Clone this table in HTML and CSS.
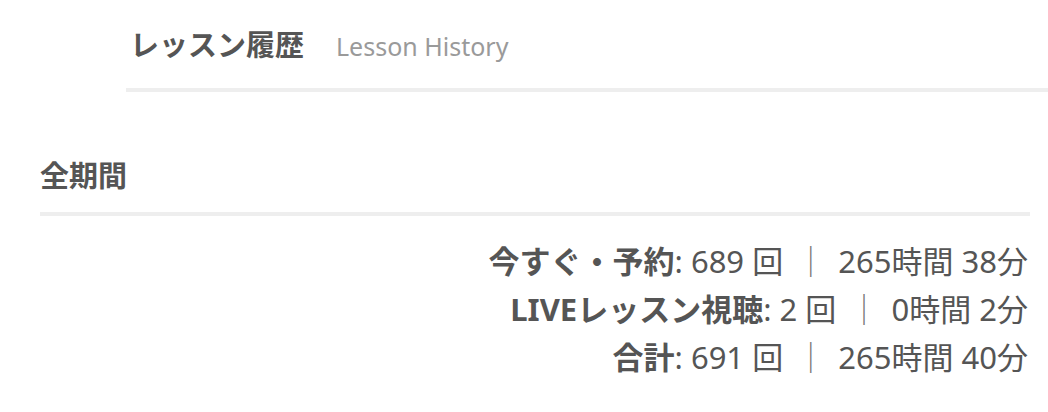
FILE: index.html
```html
<!DOCTYPE html>
<html lang="ja">
<head>
<meta charset="utf-8">
<title>レッスン履歴</title>
<link rel="stylesheet" href="styles.css">
</head>
<body>
<header class="page-header">
  <h1 class="page-title">レッスン履歴<span class="page-sub">Lesson History</span></h1>
</header>
<section class="period">
  <h2 class="period-title">全期間</h2>
  <ul class="stats">
    <li class="stat"><b class="stat-label">今すぐ・予約</b>: 689 回 <span class="sep">｜</span> 265時間 38分</li>
    <li class="stat"><b class="stat-label">LIVEレッスン視聴</b>: 2 回 <span class="sep">｜</span> 0時間 2分</li>
    <li class="stat"><b class="stat-label">合計</b>: 691 回 <span class="sep">｜</span> 265時間 40分</li>
  </ul>
</section>
</body>
</html>
```

FILE: styles.css
```css
html, body {
  margin: 0;
  padding: 0;
  background: #fff;
}
body {
  font-family: "Noto Sans", "Noto Sans CJK JP", sans-serif;
  color: #555;
}
.page-header {
  margin-left: 126px;
  padding: 25px 4px 22px;
  border-bottom: 4px solid #eee;
}
.page-title {
  margin: 0;
  font-size: 29px;
  line-height: 40px;
  font-weight: 700;
  color: #555;
  white-space: nowrap;
}
.page-sub {
  margin-left: 32px;
  font-size: 25px;
  font-weight: 400;
  color: #9a9a9a;
}
.period {
  margin: 64px 18px 0 40px;
}
.period-title {
  margin: 0;
  padding-bottom: 16px;
  border-bottom: 4px solid #eee;
  font-size: 29px;
  line-height: 40px;
  font-weight: 700;
}
.stats {
  list-style: none;
  margin: 21px 0 0;
  padding: 0 2px 0 0;
}
.stat {
  text-align: right;
  font-size: 31px;
  line-height: 48px;
  white-space: nowrap;
}
.stat-label {
  font-weight: 700;
}
.sep {
  margin: 0 4px;
  color: #777;
}
```
